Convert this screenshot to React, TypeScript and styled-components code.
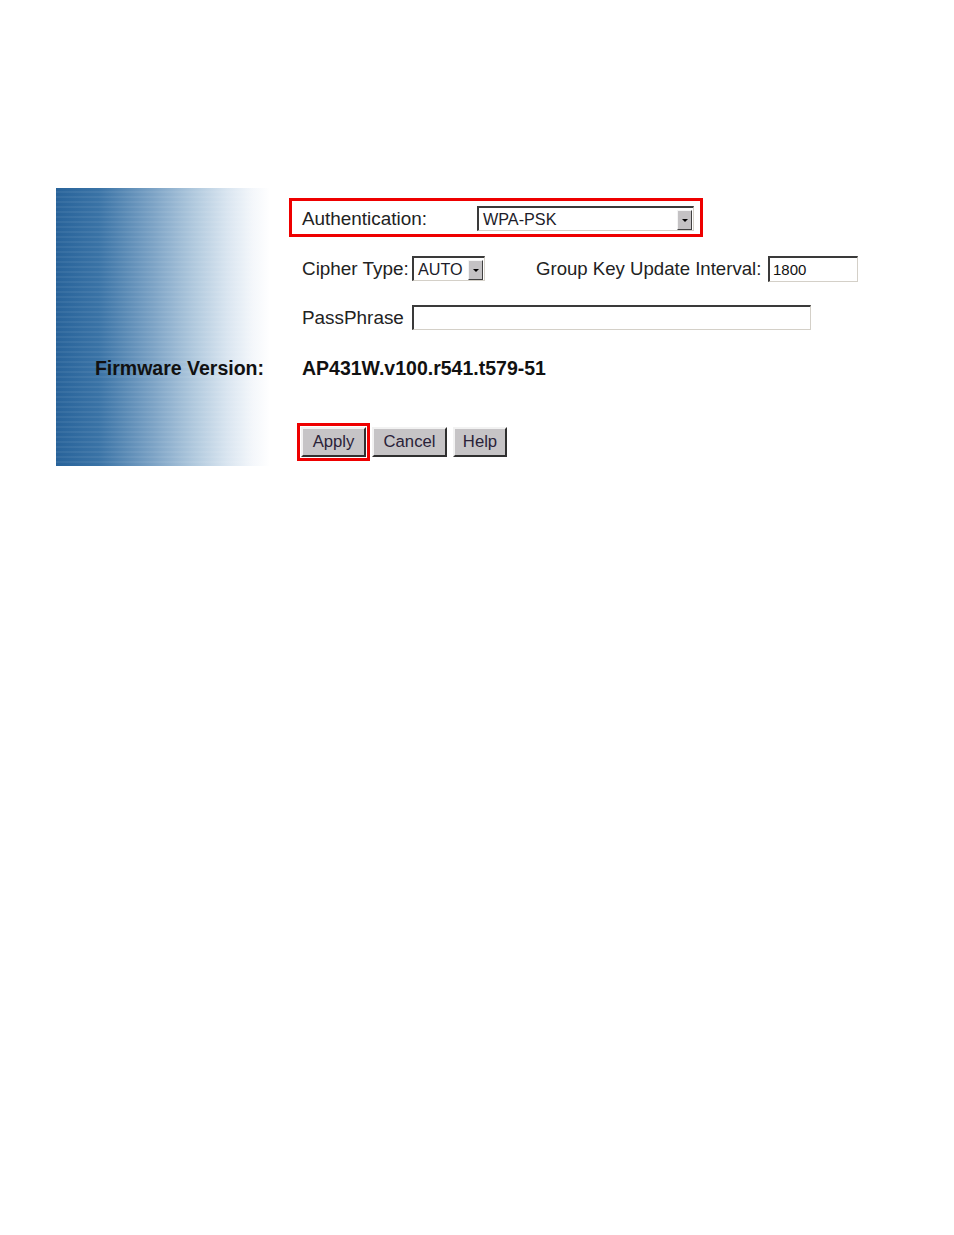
import styled, { createGlobalStyle } from 'styled-components';

const Global = createGlobalStyle`
  html, body {
    margin: 0;
    padding: 0;
    background: #fff;
  }
  body {
    font-family: "Liberation Sans", Arial, sans-serif;
    color: #222;
  }
`;

const Page = styled.div`
  width: 954px;
  height: 1235px;
  box-sizing: border-box;
  padding: 188px 0 0 56px;
`;

const Panel = styled.div`
  display: grid;
  grid-template-columns: 214px 620px;
  grid-template-rows: 10px 39px 63px 35px 66px 65px;
`;

const Side = styled.div`
  grid-column: 1;
  grid-row: 1 / -1;
  background:
    repeating-linear-gradient(to bottom, rgba(255,255,255,0) 0 3px, rgba(255,255,255,0.06) 3px 5px),
    linear-gradient(to right, #28639a 0%, #3a73a6 20%, #7ba2c5 45%, #afc8dd 64%, #d9e5f0 80%, #f4f7fb 92%, #ffffff 100%);
`;

const Highlight = styled.div`
  grid-column: 2;
  grid-row: 2;
  margin-left: 19px;
  width: 414px;
  height: 39px;
  box-sizing: border-box;
  border: 3px solid #ee0000;
  display: flex;
  align-items: center;
  padding: 2px 0 0 10px;
`;

const Row = styled.div<{ $row: number }>`
  grid-column: 2;
  grid-row: ${p => p.$row};
  display: flex;
  align-items: center;
  padding-left: 32px;
`;

const Label = styled.span<{ $w?: number; $gap?: number; $size?: number }>`
  font-size: ${p => p.$size || 18.9}px;
  color: #222;
  white-space: nowrap;
  width: ${p => (p.$w ? `${p.$w}px` : 'auto')};
  margin-left: ${p => p.$gap || 0}px;
  flex-shrink: 0;
`;

const SelectBox = styled.div<{ $w: number }>`
  width: ${p => p.$w}px;
  height: 25px;
  box-sizing: border-box;
  border-top: 2px solid #3a3a3a;
  border-left: 2px solid #3a3a3a;
  border-right: 1px solid #d4d0c8;
  border-bottom: 1px solid #d4d0c8;
  background: #fff;
  display: flex;
  align-items: center;
  justify-content: space-between;
  padding: 0 1px 0 4px;
  font-size: 16.2px;
  color: #1c1c2a;
  flex-shrink: 0;
`;

const ArrowButton = styled.span`
  width: 15px;
  height: 20px;
  box-sizing: border-box;
  background: #c4c2c4;
  border-top: 1px solid #f4f4f4;
  border-left: 1px solid #f4f4f4;
  border-right: 1px solid #404040;
  border-bottom: 1px solid #404040;
  display: flex;
  align-items: center;
  justify-content: center;
  margin-top: 1px;

  &::after {
    content: '';
    width: 0;
    height: 0;
    border-left: 3px solid transparent;
    border-right: 3px solid transparent;
    border-top: 3px solid #000;
    margin-top: 2px;
  }
`;

const TextInput = styled.div<{ $w: number; $h: number }>`
  width: ${p => p.$w}px;
  height: ${p => p.$h}px;
  box-sizing: border-box;
  border-top: 2px solid #3a3a3a;
  border-left: 2px solid #3a3a3a;
  border-right: 1px solid #d4d0c8;
  border-bottom: 1px solid #d4d0c8;
  background: #fff;
  display: flex;
  align-items: center;
  padding-left: 3px;
  font-size: 15px;
  color: #111;
  flex-shrink: 0;
`;

const FirmwareLabel = styled.div`
  grid-column: 1;
  grid-row: 5;
  display: flex;
  align-items: center;
  justify-content: flex-end;
  padding-right: 6px;
  font-size: 19.5px;
  font-weight: bold;
  color: #111;
  white-space: nowrap;
`;

const FirmwareValue = styled(Row)`
  font-size: 19.5px;
  font-weight: bold;
  color: #111;
`;

const ButtonBar = styled.div`
  grid-column: 2;
  grid-row: 6;
  align-self: end;
  display: flex;
  gap: 6px;
  padding: 0 0 9px 31px;
`;

const Button = styled.button<{ $w: number; $marked?: boolean }>`
  width: ${p => p.$w}px;
  height: 30px;
  box-sizing: border-box;
  background: #c6c4c6;
  border-top: 2px solid #f2f2f2;
  border-left: 2px solid #f2f2f2;
  border-right: 2px solid #303030;
  border-bottom: 2px solid #303030;
  font-family: "Liberation Sans", Arial, sans-serif;
  font-size: 16.7px;
  color: #2a2238;
  padding: 0;
  outline: ${p => (p.$marked ? '3px solid #ee0000' : 'none')};
  outline-offset: 1px;
`;

export default function App() {
  return (
    <Page>
      <Global />
      <Panel>
        <Side />
        <Highlight>
          <Label $w={175}>Authentication:</Label>
          <SelectBox $w={217}>
            WPA-PSK
            <ArrowButton />
          </SelectBox>
        </Highlight>
        <Row $row={3}>
          <Label $w={110}>Cipher Type:</Label>
          <SelectBox $w={73}>
            AUTO
            <ArrowButton />
          </SelectBox>
          <Label $w={232} $gap={51} $size={18.6}>Group Key Update Interval:</Label>
          <TextInput $w={90} $h={26}>1800</TextInput>
        </Row>
        <Row $row={4}>
          <Label $w={110}>PassPhrase</Label>
          <TextInput $w={399} $h={25} />
        </Row>
        <FirmwareLabel>Firmware Version:</FirmwareLabel>
        <FirmwareValue $row={5}>AP431W.v100.r541.t579-51</FirmwareValue>
        <ButtonBar>
          <Button $w={65} $marked>Apply</Button>
          <Button $w={75}>Cancel</Button>
          <Button $w={54}>Help</Button>
        </ButtonBar>
      </Panel>
    </Page>
  );
}
